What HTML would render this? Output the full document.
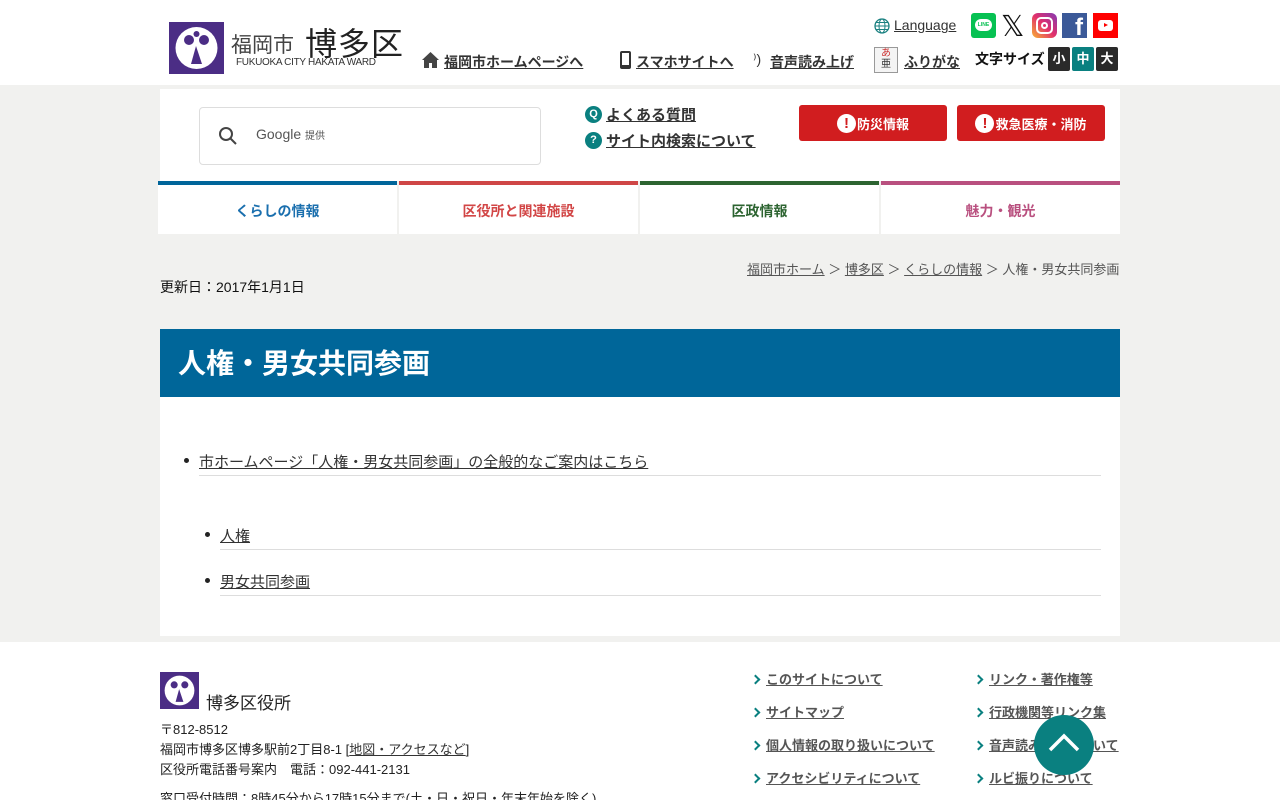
<!DOCTYPE html>
<html><head><meta charset="utf-8"><style>
*{margin:0;padding:0;box-sizing:border-box}
html,body{width:1280px;height:800px;overflow:hidden}
body{background:#f1f1ef;font-family:"Liberation Sans","Noto Sans CJK JP",sans-serif;color:#222;position:relative}
.a{position:absolute}
a{color:#333;text-decoration:underline}
.hdr{left:0;top:0;width:1280px;height:85px;background:#fff}
.b{font-weight:bold;font-size:14px}
.fs{width:22px;height:24px;color:#fff;font-size:13px;font-weight:bold;text-align:center;line-height:24px;border-radius:2px}
.red{background:#d11d1f;color:#fff;font-weight:bold;font-size:13px;width:148px;height:36px;border-radius:3px;display:flex;align-items:center;justify-content:center}
.ex{display:inline-block;width:19px;height:19px;border-radius:50%;background:#fff;color:#d11d1f;line-height:19px;text-align:center;font-size:15px;margin-right:1px}
.nav{top:181px;height:53px;width:239px;background:#fff;text-align:center;font-weight:bold;font-size:14px;line-height:53px}
.fl{font-size:13px;font-weight:bold}
.fl a{color:#555}
.fl div{height:33px;line-height:17px}
.ch{display:inline-block;width:7px;height:7px;border-right:2px solid #0a8080;border-top:2px solid #0a8080;transform:rotate(45deg);margin-right:7px;vertical-align:1px}
.dot{width:5px;height:5px;border-radius:50%;background:#222}
</style></head><body>
<div class="a hdr"></div>
<!-- logo -->
<div class="a" style="left:169px;top:22px;width:55px;height:52px;background:#4b2d85"></div>
<svg class="a" style="left:169px;top:22px" width="55" height="52" viewBox="0 0 55 52"><ellipse cx="27.5" cy="26" rx="21" ry="21" fill="#fff"/><circle cx="20" cy="18" r="5" fill="#4b2d85"/><circle cx="35" cy="18" r="5" fill="#4b2d85"/><path d="M27 24 L22 42 L33 42 Z" fill="#4b2d85"/><circle cx="27.5" cy="12" r="3" fill="#4b2d85"/></svg>
<div class="a" style="left:231px;top:29px;font-size:21px;color:#444">福岡市</div>
<div class="a" style="left:305px;top:19px;font-size:32px;color:#222;letter-spacing:1px">博多区</div>
<div class="a" style="left:236px;top:57px;font-size:10px;color:#333;letter-spacing:-0.3px">FUKUOKA CITY HAKATA WARD</div>
<svg class="a" style="left:421px;top:51px" width="19" height="18" viewBox="0 0 19 18"><path d="M9.5 1 L1 9 L3 9 L3 17 L8 17 L8 12 L11 12 L11 17 L16 17 L16 9 L18 9 Z" fill="#444"/></svg>
<a class="a b" style="left:444px;top:52px">福岡市ホームページへ</a>
<svg class="a" style="left:619px;top:50px" width="13" height="20"><rect x="1" y="1" width="11" height="18" rx="2" fill="#333"/><rect x="3" y="3" width="7" height="12" fill="#fff"/></svg>
<a class="a b" style="left:636px;top:52px">スマホサイトへ</a>
<div class="a" style="left:753px;top:51px;font-size:14px;color:#333">⁾)</div>
<a class="a b" style="left:770px;top:52px">音声読み上げ</a>
<div class="a" style="left:874px;top:47px;width:24px;height:26px;border:1px solid #999;background:#f4f4f4;font-size:10px;text-align:center;line-height:11px;color:#333"><span style="color:#c33">あ</span><br>亜</div>
<a class="a b" style="left:904px;top:52px">ふりがな</a>
<div class="a b" style="left:975px;top:49px;color:#111">文字サイズ</div>
<div class="a fs" style="left:1048px;top:47px;background:#2a2a2a">小</div>
<div class="a fs" style="left:1072px;top:47px;background:#0a8080">中</div>
<div class="a fs" style="left:1096px;top:47px;background:#2a2a2a">大</div>
<svg class="a" style="left:874px;top:18px" width="16" height="16" viewBox="0 0 16 16"><circle cx="8" cy="8" r="7" fill="none" stroke="#1a8080" stroke-width="1.3"/><ellipse cx="8" cy="8" rx="3" ry="7" fill="none" stroke="#1a8080"/><path d="M1 8H15M2 4.5H14M2 11.5H14" stroke="#1a8080"/></svg>
<a class="a" style="left:894px;top:17px;font-size:14px">Language</a>
<div class="a" style="left:971px;top:13px;width:25px;height:25px;background:#06c152;border-radius:3px"><div style="margin:6px 4px;width:17px;height:12px;background:#fff;border-radius:7px;font-size:5px;color:#06c152;text-align:center;line-height:12px;font-weight:bold">LINE</div></div>
<div class="a" style="left:1001px;top:9px;font-size:29px;color:#111">𝕏</div>
<div class="a" style="left:1032px;top:13px;width:25px;height:25px;border-radius:6px;background:linear-gradient(45deg,#f9b233,#e1306c,#833ab4)"><div style="margin:4px;width:17px;height:17px;border:2px solid #fff;border-radius:5px"><div style="margin:3px;width:7px;height:7px;border:2px solid #fff;border-radius:50%"></div></div></div>
<div class="a" style="left:1062px;top:13px;width:25px;height:25px;background:#3b5998;color:#fff;font-weight:bold;font-size:24px;text-align:right;padding-right:4px;line-height:30px">f</div>
<div class="a" style="left:1093px;top:13px;width:25px;height:25px;background:#f00"><div style="margin:7px 5px;width:15px;height:11px;background:#fff;border-radius:3px;position:relative"><div style="position:absolute;left:6px;top:3px;border-left:4px solid #f00;border-top:2.5px solid transparent;border-bottom:2.5px solid transparent"></div></div></div>

<!-- search box area -->
<div class="a" style="left:160px;top:89px;width:960px;height:92px;background:#fff"></div>
<div class="a" style="left:199px;top:107px;width:342px;height:58px;border:1px solid #ddd;border-radius:4px;background:#fff"></div>
<svg class="a" style="left:218px;top:126px" width="20" height="20"><circle cx="8" cy="8" r="6" fill="none" stroke="#444" stroke-width="2"/><path d="M12.5 12.5 L18 18" stroke="#444" stroke-width="2"/></svg>
<div class="a" style="left:256px;top:126px;font-size:14px;color:#555">Google <span style="font-size:10px">提供</span></div>
<div class="a" style="left:585px;top:106px;width:17px;height:17px;border-radius:50%;background:#0a8080;color:#fff;font-size:11px;font-weight:bold;text-align:center;line-height:17px">Q</div>
<a class="a b" style="left:606px;top:104px;font-size:15px">よくある質問</a>
<div class="a" style="left:585px;top:132px;width:17px;height:17px;border-radius:50%;background:#0a8080;color:#fff;font-size:11px;font-weight:bold;text-align:center;line-height:17px">?</div>
<a class="a b" style="left:606px;top:130px;font-size:15px">サイト内検索について</a>
<div class="a red" style="left:799px;top:105px"><span class="ex">!</span>防災情報</div>
<div class="a red" style="left:957px;top:105px"><span class="ex">!</span>救急医療・消防</div>

<div class="a nav" style="left:158px;border-top:4px solid #00659a;color:#1a6fae">くらしの情報</div>
<div class="a nav" style="left:399px;border-top:4px solid #cf4646;color:#d24646">区役所と関連施設</div>
<div class="a nav" style="left:640px;border-top:4px solid #2d6431;color:#2d6431">区政情報</div>
<div class="a nav" style="left:881px;border-top:4px solid #b9507f;color:#b9507f">魅力・観光</div>

<div class="a" style="left:747px;top:259px;font-size:13px;color:#555"><a style="color:#555">福岡市ホーム</a> ＞ <a style="color:#555">博多区</a> ＞ <a style="color:#555">くらしの情報</a> ＞ 人権・男女共同参画</div>
<div class="a" style="left:160px;top:277px;font-size:14px;color:#111">更新日：2017年1月1日</div>

<div class="a" style="left:160px;top:329px;width:960px;height:307px;background:#fff"></div>
<div class="a" style="left:160px;top:329px;width:960px;height:68px;background:#006699;color:#fff;font-weight:bold;font-size:28px;padding-left:18px;line-height:70px">人権・男女共同参画</div>
<div class="a dot" style="left:184px;top:458px"></div>
<a class="a" style="left:199px;top:451px;font-size:15px">市ホームページ「人権・男女共同参画」の全般的なご案内はこちら</a>
<div class="a" style="left:199px;top:475px;width:902px;height:1px;background:#ddd"></div>
<div class="a dot" style="left:205px;top:532px"></div>
<a class="a" style="left:220px;top:525px;font-size:15px">人権</a>
<div class="a" style="left:220px;top:549px;width:881px;height:1px;background:#ddd"></div>
<div class="a dot" style="left:205px;top:578px"></div>
<a class="a" style="left:220px;top:571px;font-size:15px">男女共同参画</a>
<div class="a" style="left:220px;top:595px;width:881px;height:1px;background:#ddd"></div>

<!-- footer -->
<div class="a" style="left:0;top:642px;width:1280px;height:170px;background:#fff"></div>
<div class="a" style="left:160px;top:672px;width:39px;height:37px;background:#4b2d85"></div>
<svg class="a" style="left:160px;top:672px" width="39" height="37" viewBox="0 0 55 52"><ellipse cx="27.5" cy="26" rx="21" ry="21" fill="#fff"/><circle cx="20" cy="18" r="5" fill="#4b2d85"/><circle cx="35" cy="18" r="5" fill="#4b2d85"/><path d="M27 24 L22 42 L33 42 Z" fill="#4b2d85"/></svg>
<div class="a" style="left:206px;top:689px;font-size:17px;color:#222">博多区役所</div>
<div class="a" style="left:160px;top:720px;font-size:13px;line-height:20px;color:#222">〒812-8512<br>福岡市博多区博多駅前2丁目8-1 [<a>地図・アクセスなど</a>]<br>区役所電話番号案内　電話：092-441-2131</div>
<div class="a" style="left:160px;top:788px;font-size:13px;color:#222">窓口受付時間：8時45分から17時15分まで(土・日・祝日・年末年始を除く)</div>
<div class="a fl" style="left:752px;top:671px"><div><span class="ch"></span><a>このサイトについて</a></div><div><span class="ch"></span><a>サイトマップ</a></div><div><span class="ch"></span><a>個人情報の取り扱いについて</a></div><div><span class="ch"></span><a>アクセシビリティについて</a></div></div>
<div class="a fl" style="left:975px;top:671px"><div><span class="ch"></span><a>リンク・著作権等</a></div><div><span class="ch"></span><a>行政機関等リンク集</a></div><div><span class="ch"></span><a>音声読み上げについて</a></div><div><span class="ch"></span><a>ルビ振りについて</a></div></div>
<div class="a" style="left:1034px;top:715px;width:60px;height:60px;border-radius:50%;background:#0a8080"></div>
<svg class="a" style="left:1034px;top:715px" width="60" height="60"><path d="M16 35 L30 21 L44 35" fill="none" stroke="#fff" stroke-width="3.5"/></svg>
</body></html>
